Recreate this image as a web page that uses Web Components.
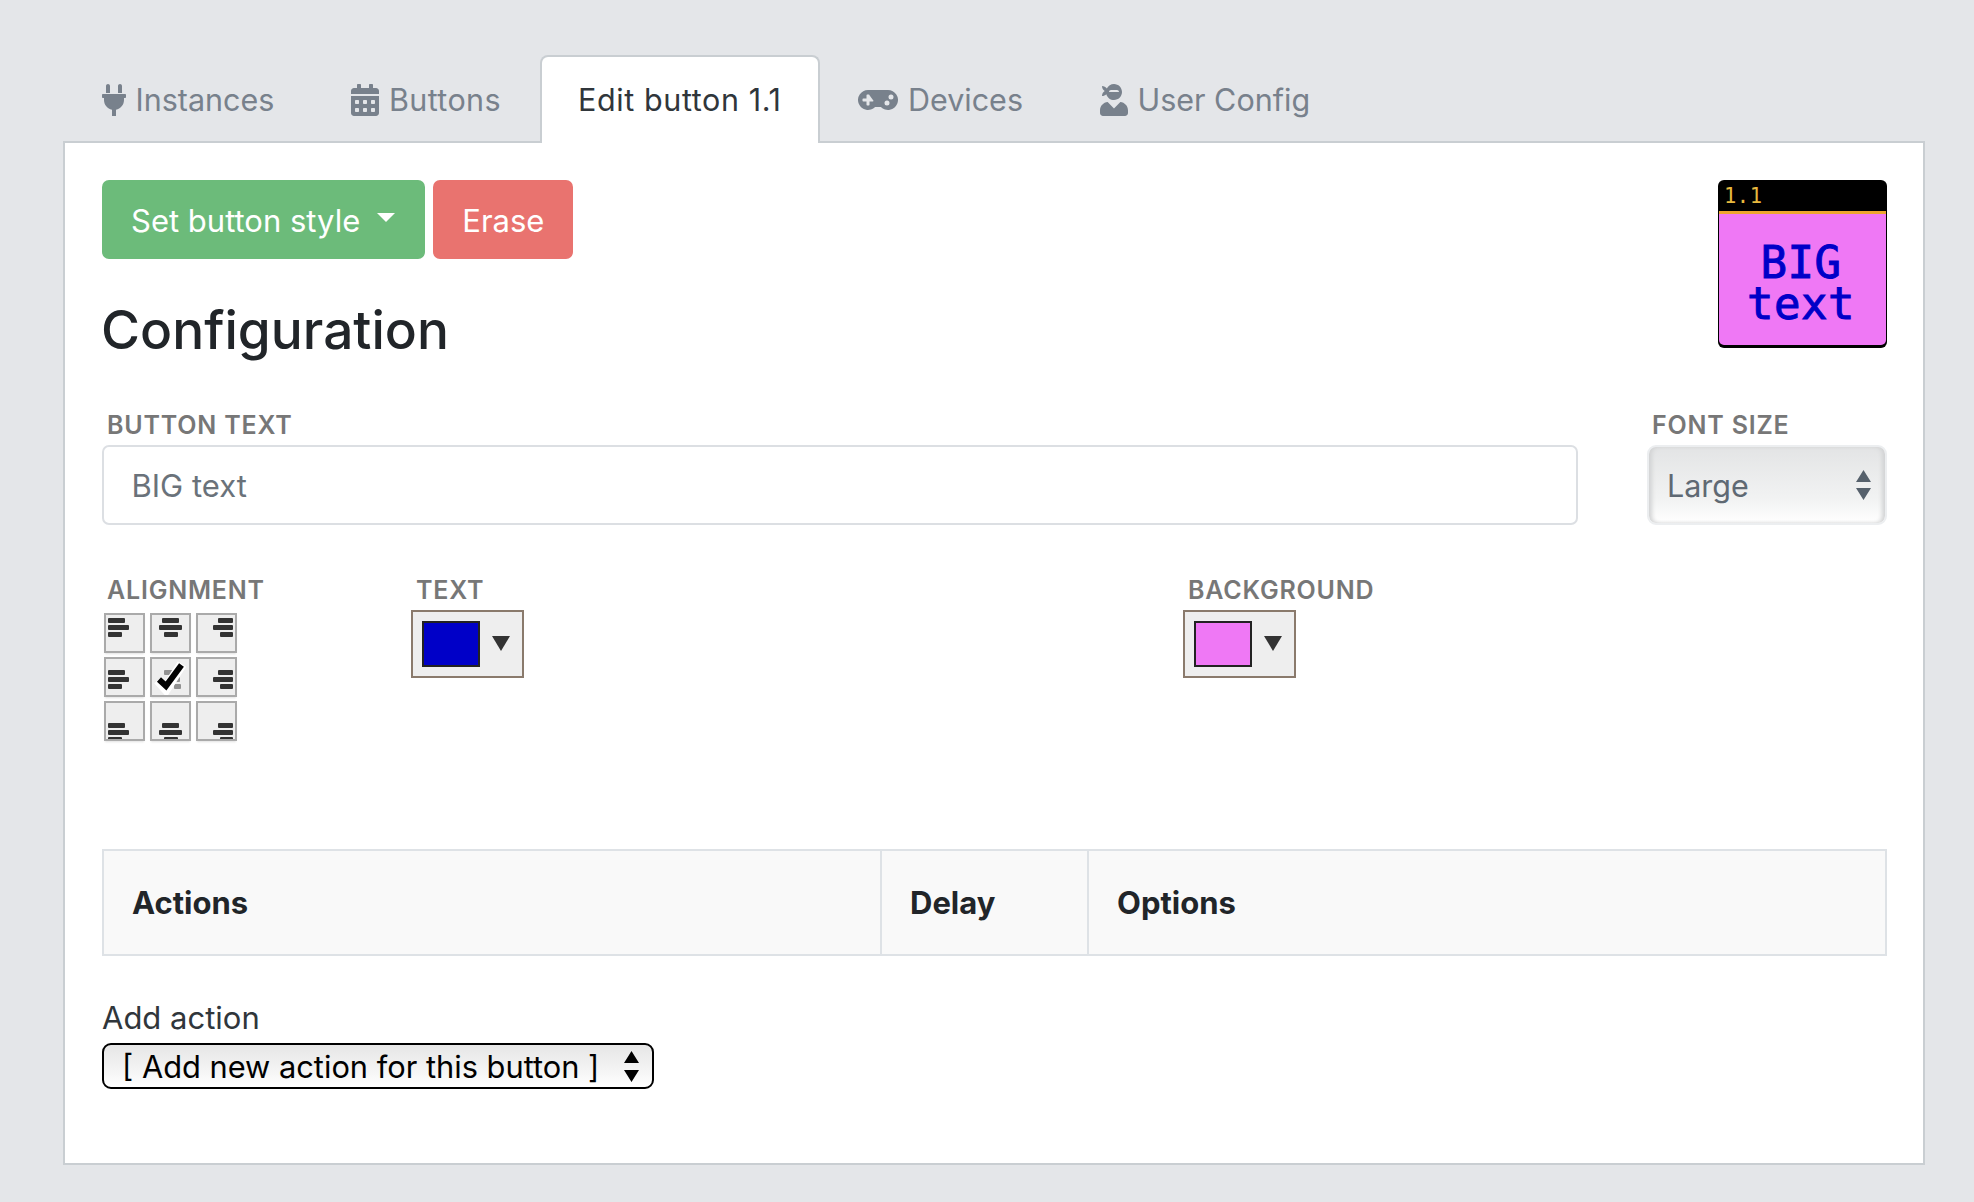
<!DOCTYPE html>
<html><head><meta charset="utf-8"><title>Edit button</title>
<style>
html,body{margin:0;padding:0;background:#e4e6e9}
body{font-family:Inter,"Liberation Sans",sans-serif;color:#212529;width:1974px;height:1202px;overflow:hidden}
</style></head><body>
<x-app></x-app>
<script>
const ICONS={
plug:['0 0 384 512','M256 144V32c0-17.673 14.327-32 32-32s32 14.327 32 32v112h-64zm112 16H16c-8.837 0-16 7.163-16 16v32c0 8.837 7.163 16 16 16h16v32c0 77.406 54.969 141.971 128 156.796V512h64v-99.204c73.031-14.825 128-79.39 128-156.796v-32h16c8.837 0 16-7.163 16-16v-32c0-8.837-7.163-16-16-16zM128 144V32c0-17.673-14.327-32-32-32S64 14.327 64 32v112h64z'],
calendar:['0 0 448 512','M0 464c0 26.5 21.5 48 48 48h352c26.5 0 48-21.5 48-48V192H0v272zm320-196c0-6.6 5.4-12 12-12h40c6.6 0 12 5.4 12 12v40c0 6.6-5.4 12-12 12h-40c-6.6 0-12-5.4-12-12v-40zm0 128c0-6.6 5.4-12 12-12h40c6.6 0 12 5.4 12 12v40c0 6.6-5.4 12-12 12h-40c-6.6 0-12-5.4-12-12v-40zM192 268c0-6.6 5.4-12 12-12h40c6.6 0 12 5.4 12 12v40c0 6.6-5.4 12-12 12h-40c-6.6 0-12-5.4-12-12v-40zm0 128c0-6.6 5.4-12 12-12h40c6.6 0 12 5.4 12 12v40c0 6.6-5.4 12-12 12h-40c-6.6 0-12-5.4-12-12v-40zM64 268c0-6.6 5.4-12 12-12h40c6.6 0 12 5.4 12 12v40c0 6.6-5.4 12-12 12H76c-6.6 0-12-5.4-12-12v-40zm0 128c0-6.6 5.4-12 12-12h40c6.6 0 12 5.4 12 12v40c0 6.6-5.4 12-12 12H76c-6.6 0-12-5.4-12-12v-40zM400 64h-48V16c0-8.8-7.2-16-16-16h-32c-8.8 0-16 7.2-16 16v48H160V16c0-8.8-7.2-16-16-16h-32c-8.8 0-16 7.2-16 16v48H48C21.5 64 0 85.5 0 112v48h448v-48c0-26.5-21.5-48-48-48z'],
gamepad:['0 0 640 512','M480.07 96H160a160 160 0 1 0 114.24 272h91.52A160 160 0 1 0 480.07 96zM248 268a12 12 0 0 1-12 12h-52v52a12 12 0 0 1-12 12h-24a12 12 0 0 1-12-12v-52H84a12 12 0 0 1-12-12v-24a12 12 0 0 1 12-12h52v-52a12 12 0 0 1 12-12h24a12 12 0 0 1 12 12zm216 76a40 40 0 1 1 40-40 40 40 0 0 1-40 40zm64-96a40 40 0 1 1 40-40 40 40 0 0 1-40 40z'],
ninja:['0 0 448 512','M325.4 289.2L224 390.6 122.6 289.2C54 295.3 0 352.2 0 422.4V464c0 26.5 21.5 48 48 48h352c26.5 0 48-21.5 48-48v-41.6c0-70.2-54-127.1-122.6-133.2zM32 192c27.3 0 51.8-11.5 69.2-29.7 15.1 53.9 64 93.7 122.8 93.7 70.7 0 128-57.3 128-128S294.7 0 224 0c-50.4 0-93.6 29.4-114.5 71.8C92.1 47.8 64 32 32 32c0 33.4 17.1 62.8 43.1 80-26 17.2-43.1 46.6-43.1 80zm144-96h96c17.7 0 32 14.3 32 32H144c0-17.7 14.3-32 32-32z']
};
function def(name,html){
  customElements.define(name,class extends HTMLElement{
    connectedCallback(){
      if(this.shadowRoot)return;
      const r=this.attachShadow({mode:'open'});
      r.innerHTML=typeof html==='function'?html(this):html;
    }
  });
}
def('x-tab',h=>{
  const ic=ICONS[h.getAttribute('icon')];
  return `<style>
  :host{display:block;font-size:30.5px;line-height:36px;color:#78818c;margin-bottom:-2px}
  :host(:first-child){margin-left:.5px}
  a{display:flex;align-items:center;height:86px;box-sizing:border-box;padding:1px 36.5px 0;border:2px solid transparent;border-bottom:0;border-radius:8px 8px 0 0}
  :host([active]) a{background:#fff;color:#30363b;border-color:#c9ced2;height:88px;padding-top:1px;padding-bottom:1px}
  svg{height:32px;fill:#78818c;margin-right:9.5px;display:block}
  </style><a>${ic?`<svg viewBox="${ic[0]}"><path d="${ic[1]}"/></svg>`:''}<slot></slot></a>`;
});
def('x-btn',`<style>
  :host{display:inline-flex;align-items:center;height:79px;box-sizing:border-box;padding:1px 29px 0;border-radius:7px;background:var(--bg);color:#fff;font-size:31px;white-space:nowrap}
  i{display:none}
  :host([caret]) {padding-right:30px}
  :host([caret]) i{display:block;margin-left:17px;margin-top:-6px;width:0;height:0;border:9px solid transparent;border-top:9px solid #fff;border-bottom:0}
  </style><slot></slot><i></i>`);
def('x-preview',`<style>
  :host{display:block;width:169px;height:168px;background:#000;border-radius:6px;overflow:hidden;box-sizing:border-box;font-family:"DejaVu Sans Mono","Liberation Mono",monospace}
  .h{height:31px;color:#e8b93f;font-size:20.5px;line-height:32px;padding-left:6px;letter-spacing:.5px}
  .b{height:134px;margin:0 1px 1px;background:#ef78f5;border-top:3px solid #eda62f;box-sizing:border-box;border-radius:0 0 5px 5px;color:#0000c8;font-size:44px;line-height:41px;text-align:center;padding-top:28px;-webkit-text-stroke:1px #0000c8;letter-spacing:.5px}
  .b div{width:130px;margin:0 auto;position:relative;left:-1.5px}
  </style><div class="h">1.1</div><div class="b"><div>BIG text</div></div>`);
def('x-field',`<style>
  :host{display:block;min-width:0}
  label{display:block;font-size:25px;font-weight:600;line-height:29px;color:#777;padding-left:5px;letter-spacing:.8px;text-transform:uppercase;margin-bottom:5px}
  </style><label><slot name="label"></slot></label><slot></slot>`);
def('x-input',`<style>
  :host{display:flex;align-items:center;height:80px;box-sizing:border-box;padding:0 27.5px;border:2px solid #dcdfe3;border-radius:7px;background:#fff;color:#6a727a;font-size:31px}
  </style><slot></slot>`);
def('x-size-select',`<style>
  :host{display:flex;align-items:center;justify-content:space-between;height:80px;box-sizing:border-box;padding:0 14px 0 18px;border:2px solid #eceef0;border-radius:9px;color:#5f6973;font-size:30.5px;
  background:linear-gradient(#e3e4e5,#f2f3f3 70%,#fff);box-shadow:inset 4px 0 4px -1px #d2d3d4,inset -4px 0 4px -1px #d2d3d4}
  svg{width:15px;height:30px;fill:#56616c;display:block}
  </style><slot></slot><svg viewBox="0 0 15 30"><path d="M7.5 0L15 12H0zM0 18h15L7.5 30z"/></svg>`);
def('x-align',h=>{
  const W=[[17,21,14],[17,23,14],[15,20,13]];
  const bars=(a,v)=>{
    const top=[3,11,20][v];
    return [0,1,2].map(i=>{
      const bw=W[a][i];
      const left=a==0?2:a==1?(37-bw)/2:(35-bw);
      return `<b style="left:${left}px;top:${top+i*7}px;width:${bw}px"></b>`;
    }).join('');
  };
  let cells='';
  for(let v=0;v<3;v++)for(let a=0;a<3;a++){
    const on=v==1&&a==1;
    cells+=`<div class="c${on?' on':''}">${on?`<b style="left:12px;top:11px;width:13px;opacity:.5"></b><b style="left:22px;top:18px;width:6px;opacity:.5"></b><b style="left:22px;top:25px;width:7px;opacity:.5"></b><svg viewBox="0 0 37 36"><path d="M6 21l8 9L30 5" fill="none" stroke="#fff" stroke-width="10"/><path d="M7 20.500l7 6.500L29.500 6" fill="none" stroke="#000" stroke-width="6"/></svg>`:bars(a,v)}</div>`;
  }
  return `<style>
  :host{display:grid;grid-template-columns:repeat(3,41px);grid-template-rows:repeat(3,40px);column-gap:5px;row-gap:4px;margin-left:2px;margin-top:8px;width:max-content}
  .c{position:relative;box-sizing:border-box;border:2px solid #aaa;background:#eee;overflow:hidden;box-shadow:0 2px 2px -1px #e2e2e2}
  b{position:absolute;height:5px;background:#333;border-radius:1px}
  svg{position:absolute;inset:0;width:100%;height:100%}
  </style>${cells}`;
});
def('x-color',h=>`<style>
  :host{display:flex;align-items:center;width:113px;height:68px;box-sizing:border-box;border:2px solid #8a7a6c;background:#eee;padding-left:9px;margin-top:2px}
  i{display:block;width:58px;height:46px;box-sizing:border-box;border:2px solid #222;background:${h.getAttribute('color')}}
  svg{width:18px;height:15px;margin-left:12px;fill:#333;display:block;margin-top:-2px}
  </style><i></i><svg viewBox="0 0 18 15"><path d="M0 0h18L9 15z"/></svg>`);
def('x-table',`<style>
  :host{display:grid;grid-template-columns:778px 207px 1fr;height:107px;box-sizing:border-box;border:2px solid #dee2e6;background:#f9f9f9;font-size:31px;font-weight:700;color:#212529}
  </style><slot></slot>`);
def('x-th',`<style>
  :host{display:flex;align-items:center;padding-left:28px;border-left:2px solid #dee2e6;margin-left:-2px}
  :host(:first-child){border-left:0;margin-left:0}
  </style><slot></slot>`);
def('x-action-select',`<style>
  :host{display:flex;align-items:center;justify-content:space-between;width:552px;height:46px;box-sizing:border-box;padding:0 13px 0 18px;border:2px solid #000;border-radius:9px;color:#000;font-size:30.8px;white-space:nowrap;
  background:linear-gradient(#e6e6e6,#f4f4f4 60%,#fff)}
  svg{width:15px;height:31px;fill:#000;display:block}
  </style><slot></slot><svg viewBox="0 0 15 31"><path d="M7.500 0L15 12H0zM0 19h15L7.500 31z"/></svg>`);
def('x-app',`<style>
  :host{display:block;padding:55px 49px 0 63px;width:1862px}
  .tabs{display:flex}
  .panel{background:#fff;border:2px solid #c9ced2;box-sizing:border-box;height:1024px;padding:37px 36px 0 37px;display:block}
  .top{display:flex;justify-content:space-between;height:214px}
  .btns{display:flex;gap:8px}
  h2{margin:41px 0 0 -1px;font-size:53.2px;font-weight:500;line-height:60px;color:#212529}
  .r1{display:grid;grid-template-columns:1476px 1fr;column-gap:69px;margin-top:17px}
  .r2{display:grid;grid-template-columns:309px 772px 1fr;margin-top:51px;height:273px}
  .add{font-size:31px;line-height:36px;margin-top:44px;margin-bottom:7px;color:#30363b}
  .left{display:block}
  </style>
  <div class="tabs">
    <x-tab icon="plug">Instances</x-tab><x-tab icon="calendar" style="letter-spacing:.4px">Buttons</x-tab><x-tab active style="letter-spacing:.6px">Edit button 1.1</x-tab><x-tab icon="gamepad">Devices</x-tab><x-tab icon="ninja">User Config</x-tab>
  </div>
  <div class="panel">
    <div class="top">
      <div class="left">
        <div class="btns"><x-btn caret style="--bg:#6cbb7a">Set button style</x-btn><x-btn style="--bg:#e9736f">Erase</x-btn></div>
        <h2>Configuration</h2>
      </div>
      <x-preview></x-preview>
    </div>
    <div class="r1">
      <x-field><span slot="label">Button text</span><x-input>BIG text</x-input></x-field>
      <x-field><span slot="label">Font size</span><x-size-select>Large</x-size-select></x-field>
    </div>
    <div class="r2">
      <x-field><span slot="label">Alignment</span><x-align></x-align></x-field>
      <x-field><span slot="label">Text</span><x-color color="#0000c8"></x-color></x-field>
      <x-field><span slot="label">Background</span><x-color color="#ef78f5"></x-color></x-field>
    </div>
    <x-table><x-th>Actions</x-th><x-th>Delay</x-th><x-th>Options</x-th></x-table>
    <div class="add">Add action</div>
    <x-action-select>[ Add new action for this button ]</x-action-select>
  </div>`);
</script>
</body></html>
